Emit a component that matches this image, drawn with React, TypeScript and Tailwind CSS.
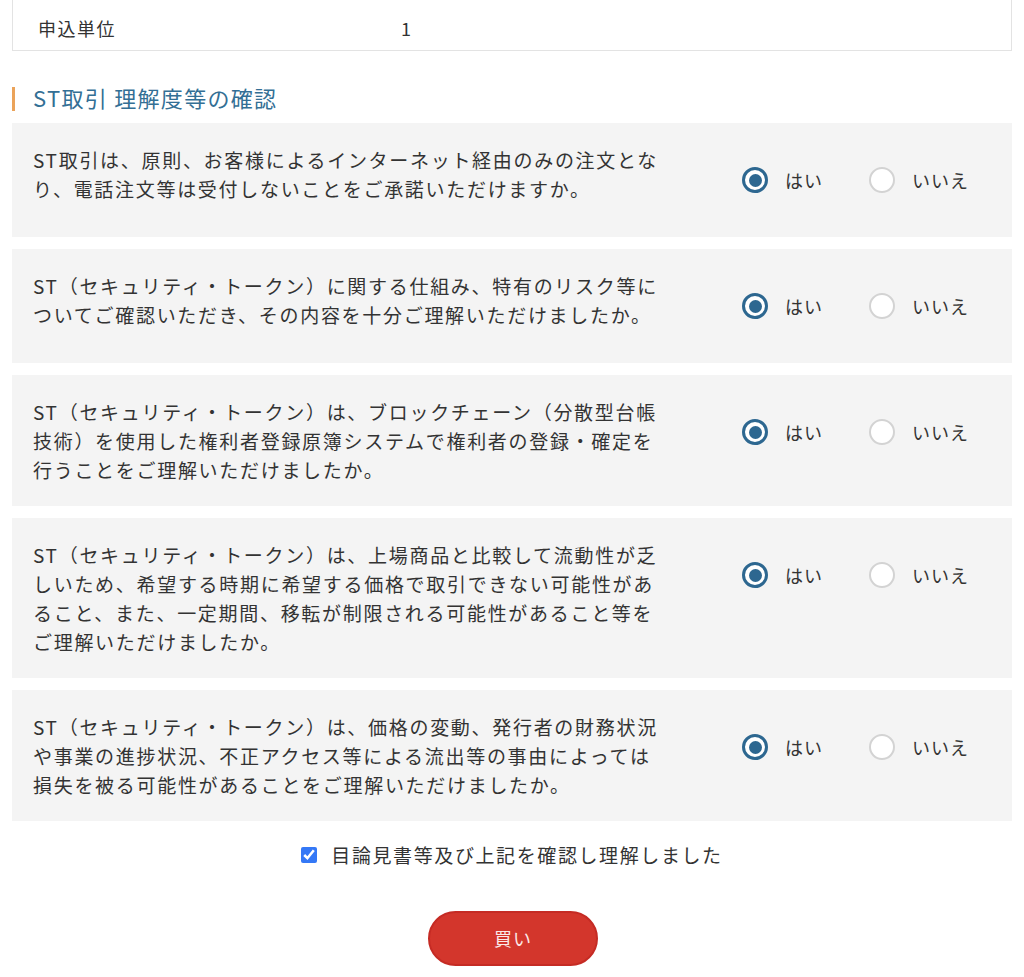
import { useState } from "react";

const questions = [
  {
    lines: [
      "ST取引は、原則、お客様によるインターネット経由のみの注文とな",
      "り、電話注文等は受付しないことをご承諾いただけますか。",
    ],
  },
  {
    lines: [
      "ST（セキュリティ・トークン）に関する仕組み、特有のリスク等に",
      "ついてご確認いただき、その内容を十分ご理解いただけましたか。",
    ],
  },
  {
    lines: [
      "ST（セキュリティ・トークン）は、ブロックチェーン（分散型台帳",
      "技術）を使用した権利者登録原簿システムで権利者の登録・確定を",
      "行うことをご理解いただけましたか。",
    ],
  },
  {
    lines: [
      "ST（セキュリティ・トークン）は、上場商品と比較して流動性が乏",
      "しいため、希望する時期に希望する価格で取引できない可能性があ",
      "ること、また、一定期間、移転が制限される可能性があること等を",
      "ご理解いただけましたか。",
    ],
  },
  {
    lines: [
      "ST（セキュリティ・トークン）は、価格の変動、発行者の財務状況",
      "や事業の進捗状況、不正アクセス等による流出等の事由によっては",
      "損失を被る可能性があることをご理解いただけましたか。",
    ],
  },
];

function Radio({ checked, label, onClick }: { checked: boolean; label: string; onClick: () => void }) {
  return (
    <button type="button" onClick={onClick} className="flex items-center gap-[17px]">
      {checked ? (
        <span className="flex h-[26px] w-[26px] items-center justify-center rounded-full border-[3px] border-[#2d6790] bg-white">
          <span className="h-[13px] w-[13px] rounded-full bg-[#2d6790]" />
        </span>
      ) : (
        <span className="h-[26px] w-[26px] rounded-full border-2 border-[#d3d3d3] bg-white" />
      )}
      <span className="text-[18px] tracking-[1px] text-[#333]">{label}</span>
    </button>
  );
}

export default function App() {
  const [answers, setAnswers] = useState<boolean[]>(questions.map(() => true));
  const [agreed, setAgreed] = useState(true);

  return (
    <div
      className="min-h-[977px] w-[1024px] bg-white text-[#333]"
      style={{ fontFamily: '"Noto Sans CJK JP", "Noto Sans", sans-serif' }}
    >
      <div className="mx-3 flex h-[51px] items-center border-x border-b border-[#e3e3e3] pt-[6px]">
        <div className="w-[388px] pl-[25px] text-[18px] tracking-[1.5px]">申込単位</div>
        <div className="text-[18px]">1</div>
      </div>

      <div className="mx-3 mt-[36px] flex h-[24px] items-center">
        <div className="h-[24px] w-[3px] bg-[#eba35a]" />
        <h2 className="-mt-[4px] pl-[18px] text-[22px] tracking-[1.3px] text-[#336f95]">ST取引 理解度等の確認</h2>
      </div>

      <div className="mx-3 mt-[12px] flex flex-col gap-[12px]">
        {questions.map((q, i) => (
          <div key={i} className="flex items-start bg-[#f4f4f4] py-[22px] pl-[21px]">
            <div className="w-[690px] text-[19px] leading-[29px] tracking-[1.7px]">
              {q.lines.map((line) => (
                <div key={line} className="whitespace-nowrap">
                  {line}
                </div>
              ))}
            </div>
            <div className="flex h-[70px] items-center gap-[46px] pl-[19px]">
              <Radio
                checked={answers[i]}
                label="はい"
                onClick={() => setAnswers(answers.map((a, j) => (j === i ? true : a)))}
              />
              <Radio
                checked={!answers[i]}
                label="いいえ"
                onClick={() => setAnswers(answers.map((a, j) => (j === i ? false : a)))}
              />
            </div>
          </div>
        ))}
      </div>

      <label className="mt-[20px] flex items-center justify-center gap-[14px]">
        <input
          type="checkbox"
          checked={agreed}
          onChange={(e) => setAgreed(e.target.checked)}
          className="h-[16px] w-[16px] accent-[#3478f6]"
        />
        <span className="text-[19px] tracking-[1.6px]">目論見書等及び上記を確認し理解しました</span>
      </label>

      <div className="mt-[41px] flex justify-center">
        <button
          type="button"
          className="ml-[2px] h-[55px] w-[170px] rounded-full border-2 border-[#c52b24] bg-[#d3362c] text-[18px] tracking-[1px] text-[#fbe9e7]"
        >
          買い
        </button>
      </div>
    </div>
  );
}
